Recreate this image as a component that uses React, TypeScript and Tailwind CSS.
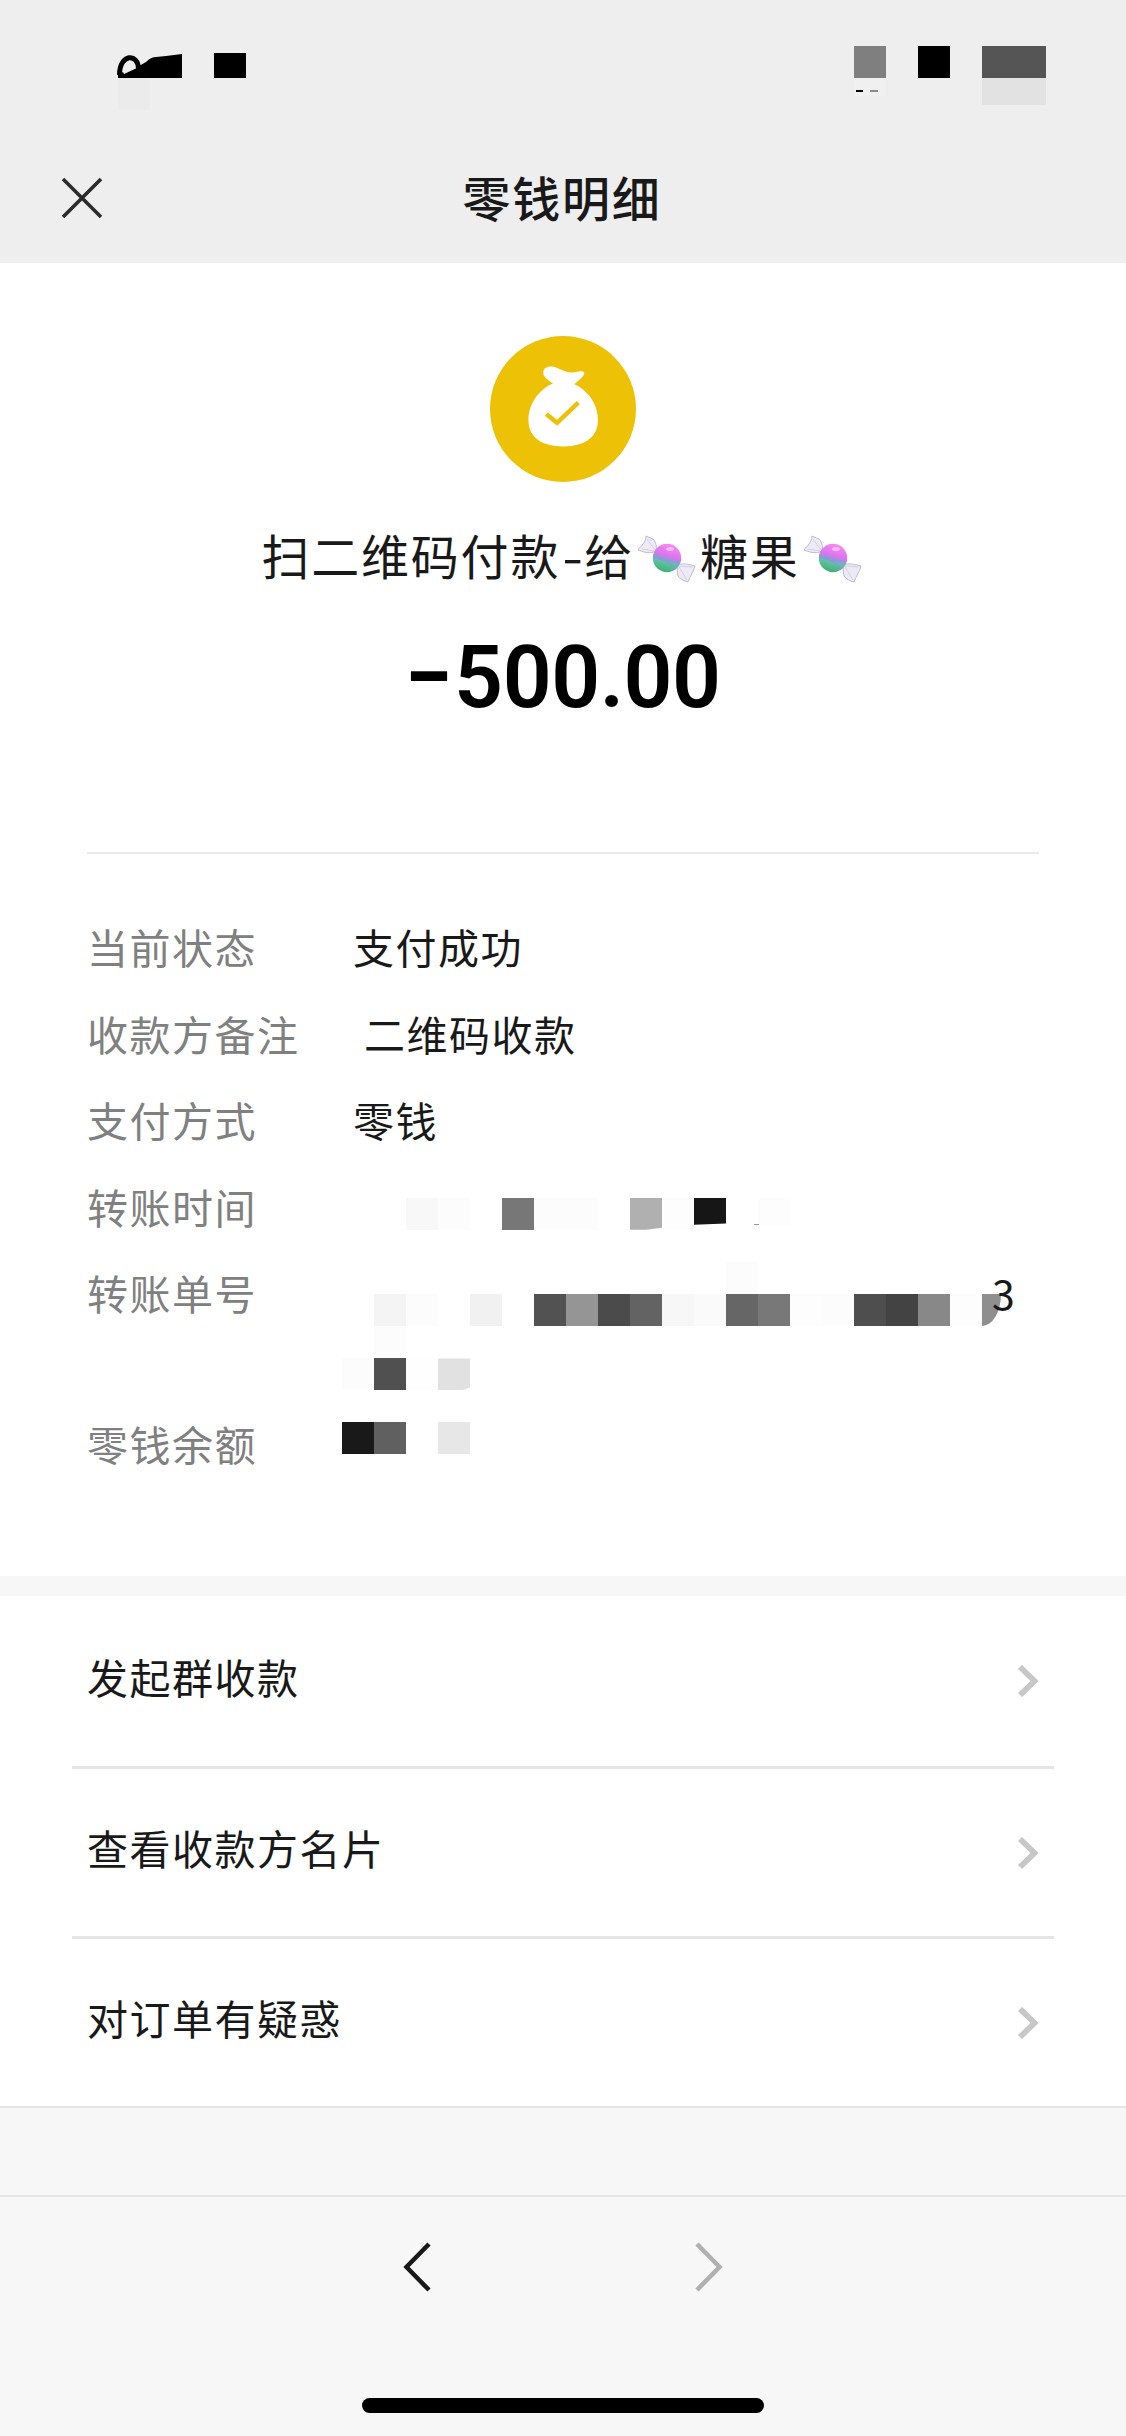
import { clsx } from "clsx";

type Cell = { color?: string; className?: string };

// One strip of 32px censor blocks, an entry without a colour is a gap
function Mosaic({ cells, className }: { cells: Cell[]; className?: string }) {
  return (
    <div className={clsx("flex", className)}>
      {cells.map((c, i) => (
        <span
          key={i}
          className={clsx("h-8 w-8 shrink-0", c.className)}
          style={{ backgroundColor: c.color }}
        />
      ))}
    </div>
  );
}

const gap: Cell = {};

const timeCells: Cell[] = [
  gap,
  gap,
  { color: "#f8f8f8" },
  { color: "#fcfcfc" },
  gap,
  { color: "#777777" },
  { color: "#fcfcfc" },
  { color: "#fcfcfc" },
  gap,
  {
    color: "#b0b0b0",
    className: "[clip-path:polygon(0_0,100%_0,100%_94%,50%_100%,0_100%)]",
  },
  { color: "#fdfdfd" },
  {
    color: "#161616",
    className: "[clip-path:polygon(0_0,100%_0,100%_80%,0_84%)]",
  },
  gap,
];

const orderCells: Cell[] = [
  gap,
  { color: "#f4f4f4" },
  { color: "#fcfcfc" },
  gap,
  { color: "#f1f1f1" },
  gap,
  { color: "#525252" },
  { color: "#959595" },
  { color: "#4b4b4b" },
  { color: "#636363" },
  { color: "#f7f7f7" },
  { color: "#fafafa" },
  { color: "#666666" },
  { color: "#787878" },
  { color: "#fdfdfd" },
  { color: "#fcfcfc" },
  { color: "#4e4e4e" },
  { color: "#434343" },
  { color: "#888888" },
  { color: "#fdfdfd" },
];

const orderTailCells: Cell[] = [
  { color: "#fcfcfc" },
  { color: "#505050" },
  { color: "#fefefe" },
  {
    color: "#e1e1e1",
    className: "[clip-path:polygon(0_0,100%_0,100%_90%,75%_100%,0_100%)]",
  },
];

const balanceCells: Cell[] = [
  { color: "#191919" },
  { color: "#606060" },
  gap,
  { color: "#e7e7e7" },
];

const actions = ["发起群收款", "查看收款方名片", "对订单有疑惑"];

function StatusBar() {
  return (
    <div className="flex h-[110px] items-start justify-between pr-20 pl-[116px]">
      <div className="flex pt-[52px]">
        <svg width="66" height="58" viewBox="0 0 66 58">
          <rect x="2" y="26" width="32" height="32" fill="#ebebeb" />
          <path
            d="M2 26V22L23 14L30 10Q35 5 40 5L50 4L66 2V26Z"
            fill="#000"
          />
          <path d="M7 20Q8 10 14 10Q20 10 21 16L8 22Z" fill="#eeeeee" />
          <path
            d="M3.500 23C3.500 1 22.500 1 22.500 17"
            fill="none"
            stroke="#000"
            strokeWidth="5"
          />
        </svg>
        <span className="mt-px ml-8 h-[25px] w-8 bg-black" />
      </div>
      <div className="flex gap-8 pt-[46px]">
        <div className="w-8">
          <div className="h-8 bg-[#7f7f7f]" />
          <div className="flex gap-[7px] bg-[#f0f0f0] pt-3 pb-1 pl-0.5">
            <span className="h-[2px] w-[7px] bg-black" />
            <span className="h-[2px] w-[8px] bg-[#8a8a8a]" />
          </div>
        </div>
        <div className="h-8 w-8 bg-black" />
        <div className="w-16">
          <div className="h-8 bg-[#555555]" />
          <div className="h-[27px] bg-[#e2e2e2]" />
        </div>
      </div>
    </div>
  );
}

function CloseIcon() {
  return (
    <svg width="42" height="42" viewBox="0 0 42 42" stroke="#2b2b2b" strokeWidth="3.6">
      <path d="M2 2L40 40M40 2L2 40" />
    </svg>
  );
}

function MoneyBag() {
  return (
    <svg width="146" height="146" viewBox="0 0 148 148">
      <circle cx="74" cy="74" r="74" fill="#edc106" />
      <path
        d="M54 36C55 31 62 30 67 32C73 34.500 78 37.500 83 37C89 36 96 34 95.500 38C94 43 89 45 85.500 49C99 55 109.500 69 109.500 85C109.500 102 97 112 74.500 112C51 112 39 102 39 85C39 69 50 54 64 48C60 46 53 41 54 36Z"
        fill="#fff"
      />
      <path
        d="M57 79L68 88L89.500 67.500"
        fill="none"
        stroke="#edc106"
        strokeWidth="4.500"
      />
    </svg>
  );
}

function Candy({ id }: { id: string }) {
  return (
    <svg width="60" height="50" viewBox="0 0 60 50" className="mt-2.5 shrink-0">
      <defs>
        <linearGradient id={id} x1="0.65" y1="0" x2="0.35" y2="1">
          <stop offset="0" stopColor="#f58cf4" />
          <stop offset="0.42" stopColor="#dc74ee" />
          <stop offset="0.56" stopColor="#8b9bd8" />
          <stop offset="0.64" stopColor="#62c3a3" />
          <stop offset="1" stopColor="#3fae74" />
        </linearGradient>
      </defs>
      <g fill="#edeaf6" stroke="#bfbdd0" strokeWidth="1">
        <path d="M19 17C16 19 11 19 7 18L1 16C4 12 9 8 9 2L16 5C19 8 20 13 19 17Z" />
        <path d="M41 31C45 29 51 30 58 32C57 37 53 42 51 48C47 47 43 45 41 42C40 38 40 34 41 31Z" />
        <path d="M18 16L10 5M17 17L5 15M42 32L56 33M42 33L50 46" fill="none" stroke="#d5cfe8" />
      </g>
      <circle cx="30" cy="24" r="14.200" fill={`url(#${id})`} />
      <path d="M17 23C25 25 34 29 39 35" fill="none" stroke="#8e93e3" strokeWidth="2" opacity="0.7" />
      <ellipse cx="33" cy="15" rx="4" ry="2" fill="#fbc4f8" opacity="0.8" />
    </svg>
  );
}

function Row({ label, children }: { label: string; children: React.ReactNode }) {
  return (
    <div className="flex">
      <div className="w-[255px] shrink-0 text-[#808080]">{label}</div>
      {children}
    </div>
  );
}

function Chevron() {
  return (
    <svg width="22" height="34" viewBox="0 0 22 34">
      <path d="M3 3L17.500 17L3 31" fill="none" stroke="#c7c7c9" strokeWidth="5.800" />
    </svg>
  );
}

export default function App() {
  return (
    <div className="flex h-[2436px] w-[1126px] flex-col bg-white font-['Noto_Sans_CJK_SC',sans-serif] text-[41px] leading-[63px] tracking-[1.5px] text-[#191919]">
      <header className="h-[263px] bg-[#eeeeee]">
        <StatusBar />
        <div className="grid grid-cols-[1fr_auto_1fr] items-start px-[61px] pt-[67px]">
          <CloseIcon />
          <h1 className="-mt-[17px] -ml-0.5 text-[48px] leading-[72px] font-medium tracking-[1.8px]">
            零钱明细
          </h1>
        </div>
      </header>

      <section className="flex h-[589px] flex-col items-center pt-[73px]">
        <MoneyBag />
        <div className="mt-9 flex h-[72px] items-center text-[48px] leading-[72px] tracking-[1.8px]">
          <span>扫二维码付款</span>
          <span className="w-6 scale-x-125 pl-[3px] text-center">-</span>
          <span>给</span>
          <span className="flex pl-[3px]">
            <Candy id="candy-a" />
          </span>
          <span className="pl-[3px]">糖果</span>
          <span className="flex pr-0.5 pl-[3px]">
            <Candy id="candy-b" />
          </span>
        </div>
        <div className="mt-[35px] flex origin-center scale-x-[0.975] items-center font-[Roboto,sans-serif] text-[88px] leading-[104px] font-semibold tracking-[-0.500px] text-black">
          <span className="pr-0.5 font-bold">−</span>500.00
        </div>
      </section>

      <section className="mx-[87px] flex h-[724px] flex-col gap-[23.600px] border-t-2 border-[#ebebeb] pt-[61px]">
        <Row label="当前状态">
          <span className="pl-[11px]">支付成功</span>
        </Row>
        <Row label="收款方备注">
          <span className="pl-[22px]">二维码收款</span>
        </Row>
        <Row label="支付方式">
          <span className="pl-[11px]">零钱</span>
        </Row>
        <Row label="转账时间">
          <Mosaic cells={timeCells} className="mt-[23px]" />
          <div className="mt-[23px] flex h-[27px] w-8 items-end bg-[#fdfdfd]">
            <span className="-ml-1 h-px w-[5px] bg-[#999999]" />
          </div>
        </Row>
        <Row label="转账单号">
          <div className="h-[127px]">
            <div className="flex">
              <div className="mt-px">
                <div className="ml-96 h-8 w-8 bg-[#fcfcfc]" />
                <Mosaic cells={orderCells} />
              </div>
              <span className="mt-[33px] h-8 w-[19px] rounded-br-[19px_32px] bg-[#8f8f8f]" />
              <span className="-ml-[9px]">3</span>
            </div>
            <div className="ml-8 h-8 w-8 bg-[#fcfcfc]" />
            <Mosaic cells={orderTailCells} />
          </div>
        </Row>
        <Row label="零钱余额">
          <Mosaic cells={balanceCells} className="mt-2.5" />
        </Row>
      </section>

      <div className="h-5 bg-[#f7f7f7]" />

      <ul className="h-[510px] px-[72px]">
        {actions.map((a) => (
          <li
            key={a}
            className="flex h-[170px] items-center justify-between border-t-3 border-[#e5e5e5] pr-[15px] pl-[15px] first:border-0"
          >
            <span className="pb-[10px]">{a}</span>
            <Chevron />
          </li>
        ))}
      </ul>

      <div className="h-[89px] border-t-2 border-[#e5e5e5] bg-[#f7f7f7]" />

      <footer className="flex flex-1 flex-col items-center border-t-2 border-[#e5e5e5] bg-[#f7f7f7]">
        <nav className="mt-[45px] flex gap-[264px]">
          <svg width="28" height="50" viewBox="0 0 28 50" fill="none" stroke="#191919" strokeWidth="4.500">
            <path d="M26 2L3.500 25L26 48" />
          </svg>
          <svg width="28" height="50" viewBox="0 0 28 50" fill="none" stroke="#b0b0b0" strokeWidth="4.500">
            <path d="M2 2L24.500 25L2 48" />
          </svg>
        </nav>
        <div className="mt-[106px] h-[15px] w-[402px] rounded-full bg-black" />
      </footer>
    </div>
  );
}
